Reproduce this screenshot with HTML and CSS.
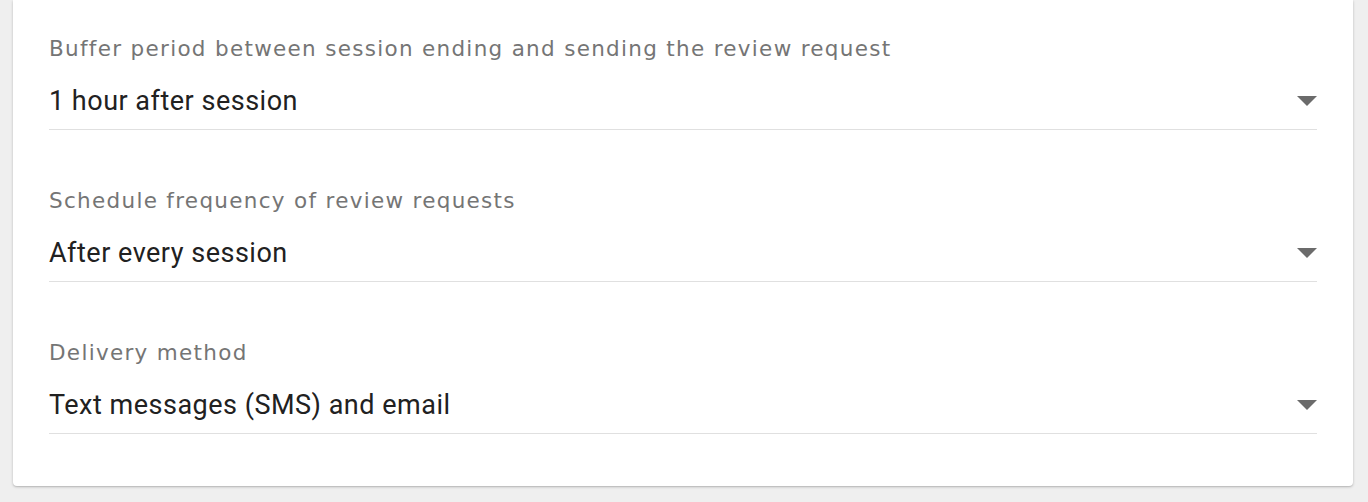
FILE: index.html
```html
<!DOCTYPE html>
<html lang="en">
<head>
<meta charset="utf-8">
<title>Review request settings</title>
<link rel="stylesheet" href="styles.css">
</head>
<body>
<div class="page">
  <section class="card">
    <div class="field">
      <div class="label">Buffer period between session ending and sending the review request</div>
      <div class="select">
        <span class="value">1 hour after session</span>
        <svg class="arrow" width="20" height="10" viewBox="0 0 20 10"><path d="M0 0h20L10 10z"/></svg>
      </div>
    </div>
    <div class="field">
      <div class="label">Schedule frequency of review requests</div>
      <div class="select">
        <span class="value">After every session</span>
        <svg class="arrow" width="20" height="10" viewBox="0 0 20 10"><path d="M0 0h20L10 10z"/></svg>
      </div>
    </div>
    <div class="field">
      <div class="label">Delivery method</div>
      <div class="select">
        <span class="value">Text messages (SMS) and email</span>
        <svg class="arrow" width="20" height="10" viewBox="0 0 20 10"><path d="M0 0h20L10 10z"/></svg>
      </div>
    </div>
  </section>
</div>
</body>
</html>
```

FILE: styles.css
```css
html, body {
  margin: 0;
  padding: 0;
  background: #efefef;
}
.page {
  padding: 0 15px 15px 13px;
}
.card {
  background: #fff;
  border-radius: 0 0 4px 4px;
  box-shadow: 0 1px 3px rgba(0, 0, 0, 0.2), 0 1px 1px rgba(0, 0, 0, 0.08);
  padding: 37px 36px 52px 36px;
  display: flex;
  flex-direction: column;
  gap: 59px;
}
.field {
  display: flex;
  flex-direction: column;
  gap: 26px;
}
.label {
  font-family: "DejaVu Sans", sans-serif;
  font-size: 21.5px;
  line-height: 24px;
  letter-spacing: 1.3px;
  color: #757575;
}
.select {
  display: flex;
  align-items: center;
  justify-content: space-between;
  padding-bottom: 14px;
  border-bottom: 1px solid #e0e0e0;
}
.value {
  font-family: Roboto, sans-serif;
  font-size: 27px;
  line-height: 28px;
  letter-spacing: 0.5px;
  color: #212121;
}
.arrow {
  fill: #6b6b6b;
}
```
